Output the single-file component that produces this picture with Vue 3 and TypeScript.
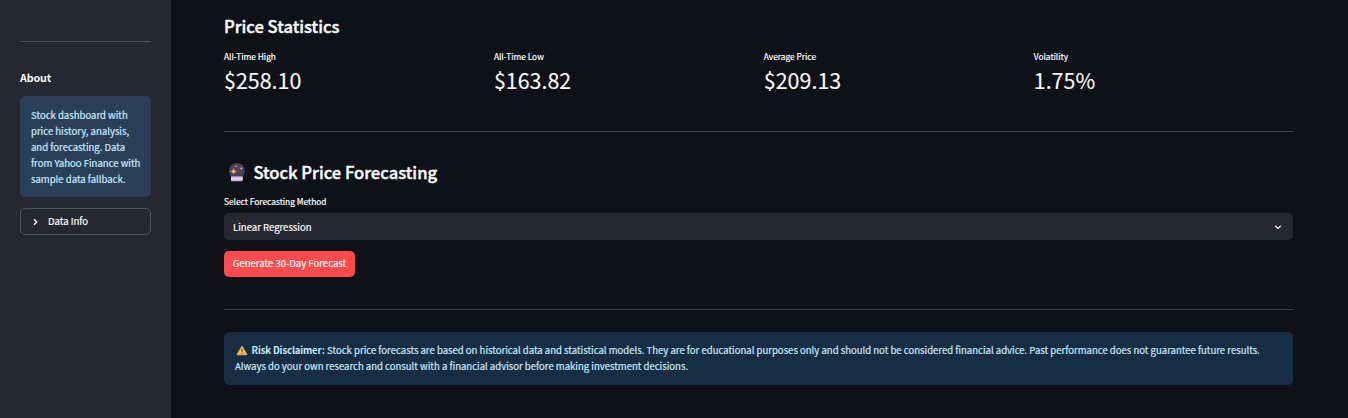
<script setup lang="ts">
interface Metric {
  label: string
  value: string
}

const metrics: Metric[] = [
  { label: 'All-Time High', value: '$258.10' },
  { label: 'All-Time Low', value: '$163.82' },
  { label: 'Average Price', value: '$209.13' },
  { label: 'Volatility', value: '1.75%' },
]

const aboutLines: string[] = [
  'Stock dashboard with',
  'price history, analysis,',
  'and forecasting. Data',
  'from Yahoo Finance with',
  'sample data fallback.',
]
</script>

<template>
  <div class="app">
    <aside class="sidebar">
      <hr class="rule" />
      <h4 class="about-title">About</h4>
      <div class="about-box">
        <div v-for="line in aboutLines" :key="line">{{ line }}</div>
      </div>
      <button class="expander" type="button">
        <svg class="chevron-right" viewBox="0 0 12 12" width="12" height="12">
          <path d="M5 3.2 7.7 6 5 8.8" />
        </svg>
        <span>Data Info</span>
      </button>
    </aside>

    <main class="main">
      <h3 class="stats-title"><span>Price Statistics</span></h3>
      <section class="metrics">
        <div v-for="m in metrics" :key="m.label" class="metric">
          <div class="metric-label">{{ m.label }}</div>
          <div class="metric-value">{{ m.value }}</div>
        </div>
      </section>
      <hr class="rule" />

      <h3 class="forecast-title">
        <svg class="crystal" viewBox="0 0 18 20" width="18" height="20">
          <defs>
            <radialGradient id="ball" cx="0.5" cy="0.4" r="0.6">
              <stop offset="0" stop-color="#51455f" />
              <stop offset="0.7" stop-color="#463f57" />
              <stop offset="1" stop-color="#39394c" />
            </radialGradient>
            <linearGradient id="stand" x1="0" y1="0" x2="0" y2="1">
              <stop offset="0" stop-color="#b59bc9" />
              <stop offset="0.45" stop-color="#eadcf4" />
              <stop offset="1" stop-color="#bba5cf" />
            </linearGradient>
          </defs>
          <circle cx="8.900" cy="9" r="8" fill="url(#ball)" />
          <path d="M3.600 14.300h10.600q.6 0 .6.600v3.400q0 1-1 1H4q-1 0-1-1v-3.400q0-.6.600-.6z" fill="url(#stand)" />
          <path d="M5.600 6.500 6.500 8.500 8.500 9.400 6.500 10.300 5.600 12.300 4.700 10.300 2.700 9.400 4.700 8.500z" fill="#ffb35a" stroke="#ffb35a" stroke-width="0.3" />
          <path d="M13.300 4.600 13.900 5.900 15.100 6.400 13.900 6.900 13.300 8.200 12.700 6.900 11.500 6.400 12.700 5.900z" fill="#f5a04e" />
          <circle cx="8" cy="4.300" r="1" fill="#d88742" />
        </svg>
        <span>Stock Price Forecasting</span>
      </h3>

      <div class="field-label">Select Forecasting Method</div>
      <div class="select">
        <span>Linear Regression</span>
        <svg viewBox="0 0 12 12" width="12" height="12">
          <path d="M3.2 4.7 6 7.4 8.8 4.7" />
        </svg>
      </div>
      <button class="generate" type="button"><span>Generate 30-Day Forecast</span></button>
      <hr class="rule" />

      <div class="disclaimer">
        <div class="line">
          <svg class="warning" viewBox="0 0 12 11" width="12" height="11">
            <path d="M6 1.1 11 9.7H1z" fill="#fdb44e" stroke="#fdb44e" stroke-width="0.9" stroke-linejoin="round" />
            <path d="M5.400 3.700h1.200L6.300 7H5.700z" fill="#806040" stroke="#806040" stroke-width="0.3" />
            <circle cx="6" cy="8.4" r="0.7" fill="#806040" />
          </svg>
          <strong>Risk Disclaimer:</strong>
          <span class="first">Stock price forecasts are based on historical data and statistical models. They are for educational purposes only and should not be considered financial advice. Past performance does not guarantee future results.</span>
        </div>
        <div class="line"><span class="second">Always do your own research and consult with a financial advisor before making investment decisions.</span></div>
      </div>
    </main>
  </div>
</template>

<style>
html,
body {
  margin: 0;
  background: #0e1117;
}
</style>

<style scoped>
.app {
  display: flex;
  width: 1348px;
  height: 418px;
  overflow: hidden;
  background: #0e1117;
  color: #fafafa;
  font-family: "Noto Sans CJK SC", "Noto Sans", sans-serif;
  font-size: 9.55px;
  font-weight: 400;
  line-height: 16px;
  white-space: nowrap;
  -webkit-text-stroke: 0.2px currentColor;
}

.sidebar {
  box-sizing: border-box;
  flex: none;
  width: 171px;
  padding: 41px 20px 0;
  background: #262730;
}

.main {
  box-sizing: border-box;
  width: 1122px;
  padding: 13px 0 0 53px;
}

.rule {
  height: 1px;
  margin: 0;
  border: 0;
  background: #3d4044;
}

.sidebar .rule {
  background: #515259;
}

h3,
h4 {
  margin: 0;
  font-weight: 500;
}

h3 {
  -webkit-text-stroke: 0.4px currentColor;
}

.about-title {
  margin-top: 28px;
  font-size: 10.7px;
  line-height: 16px;
  font-weight: 700;
  letter-spacing: -0.15px;
  -webkit-text-stroke: 0;
}

.about-box {
  box-sizing: border-box;
  height: 101px;
  margin-top: 10px;
  padding: 11px 11px 0;
  border-radius: 5px;
  background: #2b3f58;
  color: #c7ebff;
}

.expander {
  box-sizing: border-box;
  display: flex;
  align-items: center;
  width: 100%;
  height: 27px;
  margin-top: 11px;
  padding: 0 8px;
  gap: 7px;
  border: 1px solid #51525b;
  border-radius: 5px;
  background: none;
  color: inherit;
  font: inherit;
}

.expander span,
.generate span {
  padding-bottom: 2px;
}

svg {
  flex: none;
  display: block;
}

.expander path,
.select path {
  fill: none;
  stroke: #fafafa;
  stroke-width: 1.4;
}

.stats-title {
  height: 26px;
  font-size: 16.6px;
  line-height: 26px;
}

.metrics {
  display: grid;
  grid-template-columns: repeat(4, 1fr);
  column-gap: 10.67px;
  height: 83px;
  margin-top: 9px;
}

.metric-label {
  font-size: 8.35px;
  line-height: 16px;
}

.metric-value {
  font-size: 21.45px;
  line-height: 32px;
  -webkit-text-stroke: 0.1px currentColor;
}

.forecast-title {
  display: flex;
  align-items: center;
  height: 26px;
  margin-top: 27px;
  padding-left: 4px;
  gap: 7.4px;
  font-size: 16.6px;
  line-height: 26px;
}

.field-label {
  margin-top: 8px;
  font-size: 8.35px;
  line-height: 16px;
}

.select {
  box-sizing: border-box;
  display: flex;
  align-items: center;
  justify-content: space-between;
  height: 27px;
  margin-top: 4px;
  padding: 0 9px;
  border-radius: 5px;
  background: #262730;
}

.generate {
  display: flex;
  align-items: center;
  justify-content: center;
  width: 131px;
  height: 26px;
  margin: 11px 0 32px;
  padding: 0;
  border: 0;
  border-radius: 5px;
  background: #ff4b4b;
  color: #fafafa;
  font: inherit;
}

.disclaimer {
  box-sizing: border-box;
  height: 53px;
  margin-top: 22px;
  padding: 10px 11px 0;
  border-radius: 5px;
  background: #172d43;
  color: #c7ebff;
}

.line {
  display: flex;
  align-items: center;
  height: 16px;
}

.warning {
  margin: 1px 3.5px 0 1px;
}

strong {
  margin-right: 2.4px;
  font-weight: 700;
  letter-spacing: -0.13px;
  -webkit-text-stroke: 0;
}
</style>
